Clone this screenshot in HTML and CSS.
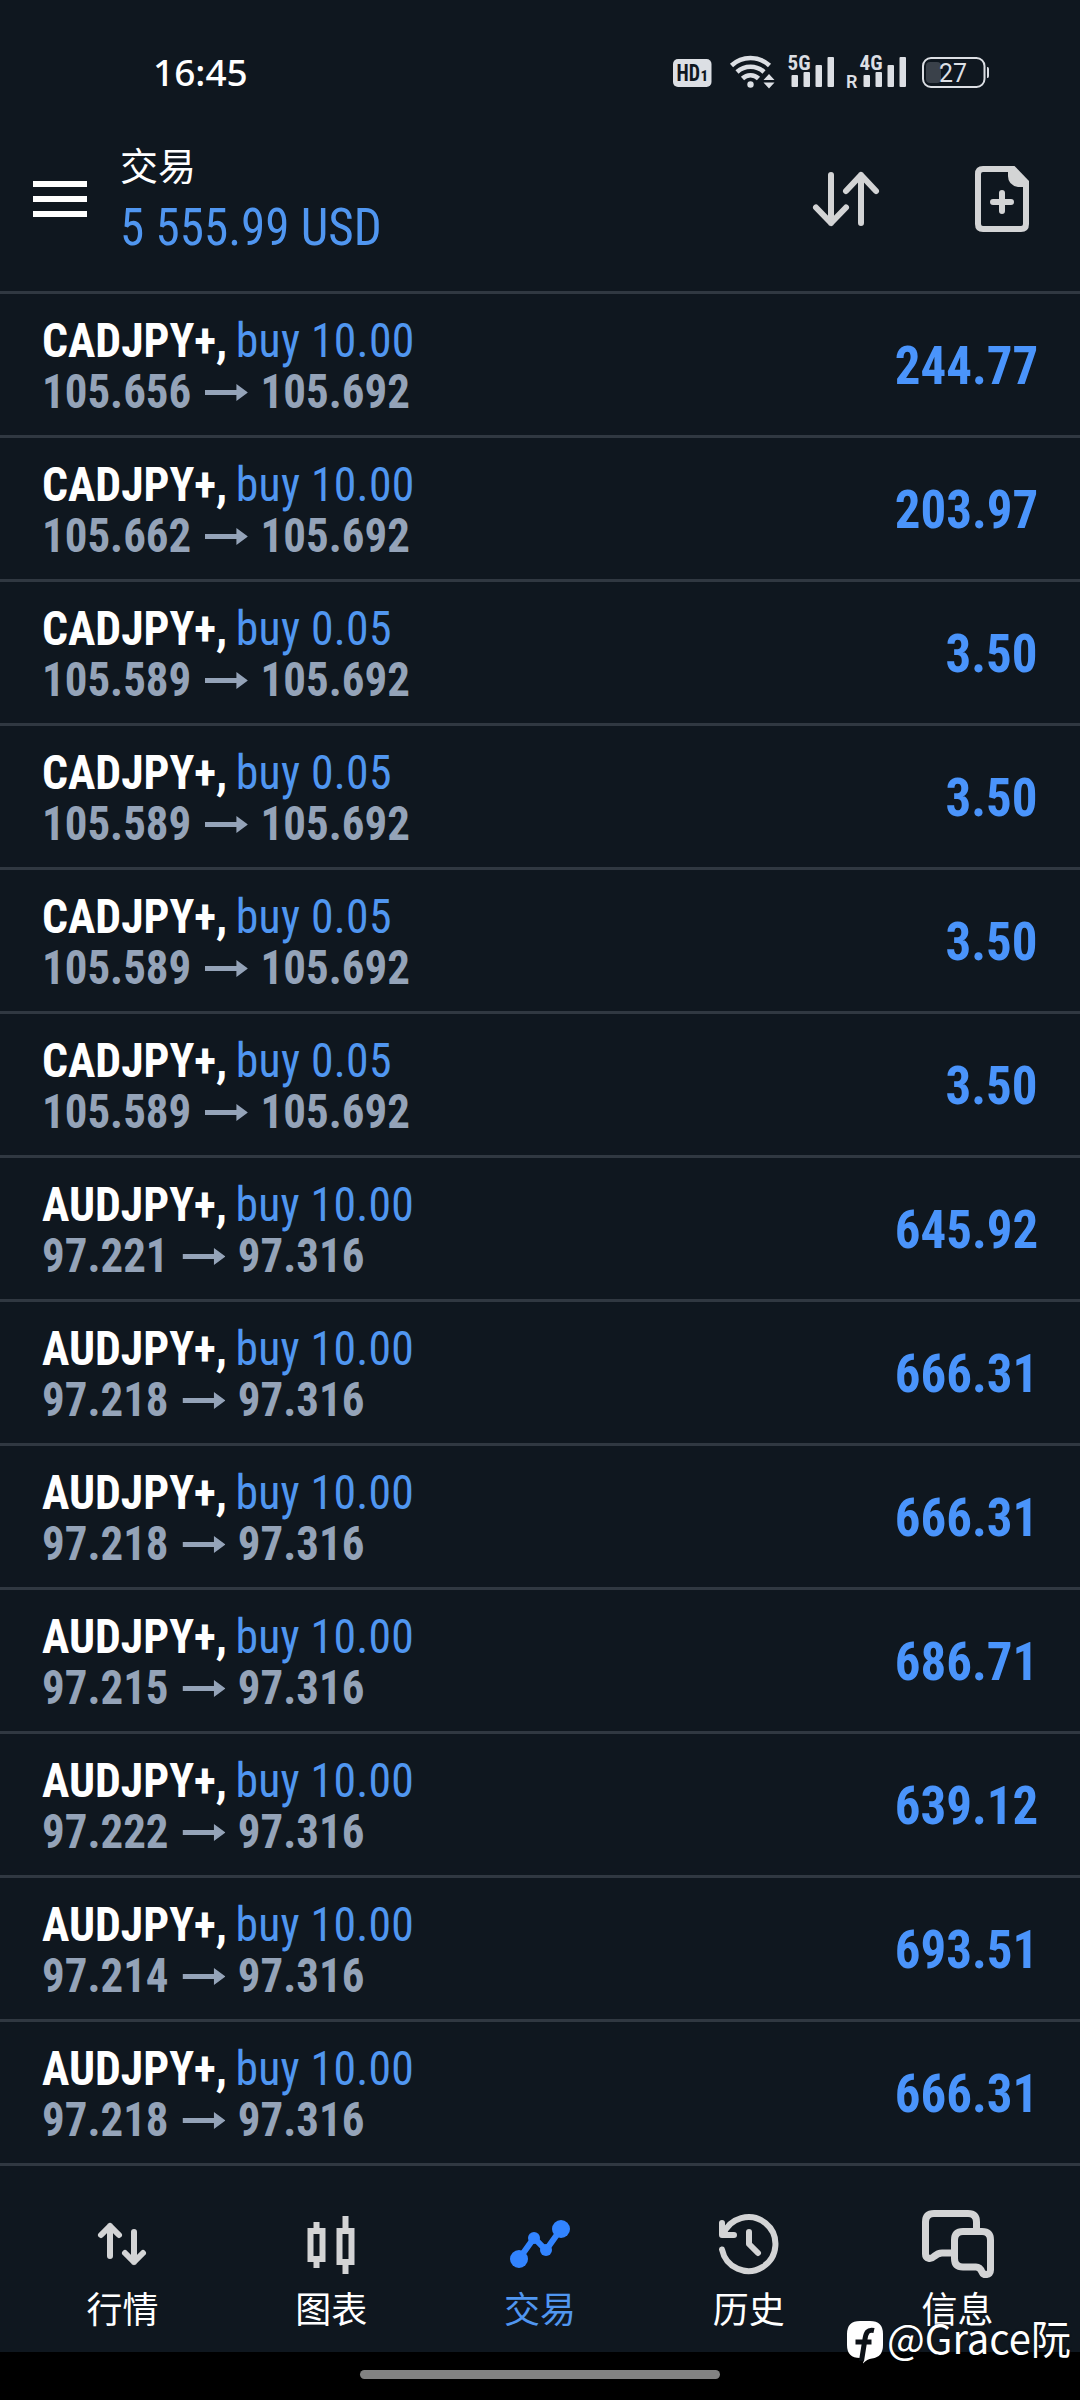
FILE: index.html
```html
<!DOCTYPE html>
<html lang="zh-CN">
<head>
<meta charset="utf-8">
<title>交易</title>
<link rel="stylesheet" href="styles.css">
</head>
<body>
<div class="screen">
  <div class="status-bar">
    <span class="clock">16:45</span>
    <svg class="status-icons" width="330" height="40" viewBox="668 52 330 40">
      <rect x="673" y="59" width="38.500" height="28" rx="5" fill="#dcdfe4"/>
      <text x="676.500" y="81" class="hd" textLength="23.500" lengthAdjust="spacingAndGlyphs">HD</text>
      <text x="700.500" y="81" class="hd-sim">1</text>
      <g fill="none" stroke="#dcdfe4" stroke-width="4.600">
        <path d="M731.500 65.500A28 28 0 0 1 769.500 65.500"/>
        <path d="M737 72A20 20 0 0 1 764 72"/>
        <path d="M742.500 78.500A11.500 11.500 0 0 1 758.500 78.500"/>
      </g>
      <g fill="#dcdfe4">
        <circle cx="750.500" cy="84.500" r="3.200"/>
        <path stroke="#0f171f" stroke-width="1.500" paint-order="stroke" d="M763.500 80 L769 74 L774.500 80 Z M763.500 82.500 L769 88.500 L774.500 82.500 Z"/>
        <rect x="791.500" y="75" width="6.500" height="12" rx="1"/>
        <rect x="803.500" y="72" width="6.500" height="15" rx="1"/>
        <rect x="815.500" y="65" width="6.500" height="22" rx="1"/>
        <rect x="827.500" y="57" width="6.500" height="30" rx="1"/>
        <rect x="863.500" y="75" width="6.500" height="12" rx="1"/>
        <rect x="875.500" y="72" width="6.500" height="15" rx="1"/>
        <rect x="887.500" y="65" width="6.500" height="22" rx="1"/>
        <rect x="899.500" y="57" width="6.500" height="30" rx="1"/>
        <path d="M987 67 H987.500 Q989 67 989 69 V76 Q989 78 987.500 78 H987 Z"/>
      </g>
      <text x="787.500" y="70" class="net" textLength="23" lengthAdjust="spacingAndGlyphs">5G</text>
      <text x="859.500" y="70" class="net" textLength="23" lengthAdjust="spacingAndGlyphs">4G</text>
      <text x="846" y="88" class="roam">R</text>
      <rect x="926" y="62" width="15" height="21" rx="4" fill="#3a414a"/>
      <rect x="923" y="58" width="61.500" height="29" rx="8" fill="none" stroke="#dcdfe4" stroke-width="2"/>
      <text x="939" y="81.500" class="battery" textLength="28" lengthAdjust="spacingAndGlyphs">27</text>
    </svg>
  </div>

  <header class="header">
    <svg class="menu" width="54" height="36" viewBox="0 0 54 36"><path d="M0 0H54V6H0ZM0 15H54V21H0ZM0 30H54V36H0Z" fill="#fff"/></svg>
    <div class="account">
      <h1 class="title">交易</h1>
      <div class="balance">5 555.99 USD</div>
    </div>
    <svg class="sort" width="70" height="60" viewBox="811 169 70 60" fill="none" stroke="#d3d4d5" stroke-width="6" stroke-linecap="round" stroke-linejoin="round">
      <path d="M831 175V223M816 207.500L831 223L846 207.500M861 223V175M846 191L861 175L876 191"/>
    </svg>
    <svg class="new-order" width="54" height="66" viewBox="975 166 54 66">
      <path d="M1014 169H983Q978 169 978 174V224Q978 229 983 229H1021Q1026 229 1026 224V183" fill="none" stroke="#d3d4d5" stroke-width="6"/>
      <path d="M1008 166H1014.500L1029 181V187H1018Q1008 185 1008 176Z" fill="#d3d4d5"/>
      <path d="M1002 193V211M993 202H1011" stroke="#d3d4d5" stroke-width="6" stroke-linecap="round"/>
    </svg>
  </header>

  <svg width="0" height="0" class="defs"><defs>
    <symbol id="to" viewBox="0 0 43 17" preserveAspectRatio="none"><path d="M0 6H31.500V0L43 8.500L31.500 17V11H0Z" fill="#94a3b8"/></symbol>
  </defs></svg>

  <main class="positions">
    <div class="row"><div class="deal"><div class="order"><b class="symbol">CADJPY+,</b><span class="side">buy 10.00</span></div><div class="prices"><span>105.656</span><svg class="to"><use href="#to"/></svg><span>105.692</span></div></div><div class="profit">244.77</div></div>
    <div class="row"><div class="deal"><div class="order"><b class="symbol">CADJPY+,</b><span class="side">buy 10.00</span></div><div class="prices"><span>105.662</span><svg class="to"><use href="#to"/></svg><span>105.692</span></div></div><div class="profit">203.97</div></div>
    <div class="row"><div class="deal"><div class="order"><b class="symbol">CADJPY+,</b><span class="side">buy 0.05</span></div><div class="prices"><span>105.589</span><svg class="to"><use href="#to"/></svg><span>105.692</span></div></div><div class="profit">3.50</div></div>
    <div class="row"><div class="deal"><div class="order"><b class="symbol">CADJPY+,</b><span class="side">buy 0.05</span></div><div class="prices"><span>105.589</span><svg class="to"><use href="#to"/></svg><span>105.692</span></div></div><div class="profit">3.50</div></div>
    <div class="row"><div class="deal"><div class="order"><b class="symbol">CADJPY+,</b><span class="side">buy 0.05</span></div><div class="prices"><span>105.589</span><svg class="to"><use href="#to"/></svg><span>105.692</span></div></div><div class="profit">3.50</div></div>
    <div class="row"><div class="deal"><div class="order"><b class="symbol">CADJPY+,</b><span class="side">buy 0.05</span></div><div class="prices"><span>105.589</span><svg class="to"><use href="#to"/></svg><span>105.692</span></div></div><div class="profit">3.50</div></div>
    <div class="row"><div class="deal"><div class="order"><b class="symbol">AUDJPY+,</b><span class="side">buy 10.00</span></div><div class="prices"><span>97.221</span><svg class="to"><use href="#to"/></svg><span>97.316</span></div></div><div class="profit">645.92</div></div>
    <div class="row"><div class="deal"><div class="order"><b class="symbol">AUDJPY+,</b><span class="side">buy 10.00</span></div><div class="prices"><span>97.218</span><svg class="to"><use href="#to"/></svg><span>97.316</span></div></div><div class="profit">666.31</div></div>
    <div class="row"><div class="deal"><div class="order"><b class="symbol">AUDJPY+,</b><span class="side">buy 10.00</span></div><div class="prices"><span>97.218</span><svg class="to"><use href="#to"/></svg><span>97.316</span></div></div><div class="profit">666.31</div></div>
    <div class="row"><div class="deal"><div class="order"><b class="symbol">AUDJPY+,</b><span class="side">buy 10.00</span></div><div class="prices"><span>97.215</span><svg class="to"><use href="#to"/></svg><span>97.316</span></div></div><div class="profit">686.71</div></div>
    <div class="row"><div class="deal"><div class="order"><b class="symbol">AUDJPY+,</b><span class="side">buy 10.00</span></div><div class="prices"><span>97.222</span><svg class="to"><use href="#to"/></svg><span>97.316</span></div></div><div class="profit">639.12</div></div>
    <div class="row"><div class="deal"><div class="order"><b class="symbol">AUDJPY+,</b><span class="side">buy 10.00</span></div><div class="prices"><span>97.214</span><svg class="to"><use href="#to"/></svg><span>97.316</span></div></div><div class="profit">693.51</div></div>
    <div class="row"><div class="deal"><div class="order"><b class="symbol">AUDJPY+,</b><span class="side">buy 10.00</span></div><div class="prices"><span>97.218</span><svg class="to"><use href="#to"/></svg><span>97.316</span></div></div><div class="profit">666.31</div></div>
  </main>

  <nav class="tabs">
    <a class="tab">
      <svg class="tab-icon" viewBox="82 2204 80 80" fill="none" stroke="#d3d4d5" stroke-width="6" stroke-linecap="round" stroke-linejoin="round"><path d="M110 2256V2226M101 2235L110 2226L119 2235M134 2232V2262M125 2253L134 2262L143 2253"/></svg>
      <span>行情</span>
    </a>
    <a class="tab">
      <svg class="tab-icon" viewBox="291 2204 80 80" fill="none" stroke="#d3d4d5" stroke-width="6"><path d="M310.500 2231H322.500V2259H310.500ZM316.500 2222V2228M316.500 2262V2268M339.500 2231H351.500V2262H339.500ZM345.500 2216V2228M345.500 2265V2274"/></svg>
      <span>图表</span>
    </a>
    <a class="tab active">
      <svg class="tab-icon" viewBox="500 2204 80 80" fill="#3284ff"><path d="M519 2259L534 2238L546 2250L561 2229" fill="none" stroke="#3284ff" stroke-width="6"/><circle cx="519" cy="2259" r="9"/><circle cx="534" cy="2238" r="6"/><circle cx="546" cy="2250" r="6"/><circle cx="561" cy="2229" r="9"/></svg>
      <span>交易</span>
    </a>
    <a class="tab">
      <svg class="tab-icon" viewBox="709 2204 80 80" fill="none" stroke="#d3d4d5" stroke-width="6" stroke-linecap="round" stroke-linejoin="round"><path d="M722 2223V2235H734M723 2235A27 27 0 1 1 722 2249.500M749 2232V2244L758 2253"/></svg>
      <span>历史</span>
    </a>
    <a class="tab">
      <svg class="tab-icon" viewBox="918 2204 80 80" fill="none" stroke="#d3d4d5" stroke-width="7"><path d="M976.500 2229V2222Q976.500 2213.500 968 2213.500H934Q925.500 2213.500 925.500 2222V2254C925.500 2259 931 2259.500 934 2256.500Q938 2253 942 2253H952"/><path d="M963 2231.500H982Q990.500 2231.500 990.500 2240V2270C990.500 2276 983.500 2275.500 982 2272Q980 2267 976 2267H963Q954.500 2267 954.500 2258.500V2240Q954.500 2231.500 963 2231.500Z"/></svg>
      <span>信息</span>
    </a>
  </nav>

  <footer class="gesture"><div class="pill"></div></footer>

  <div class="watermark">
    <svg width="38" height="44" viewBox="846 2320 38 44"><path d="M860 2321H870Q883 2321 883 2334V2345Q883 2357 872 2358.500Q867 2359 863 2363.500L864 2358H860Q847 2358 847 2345V2334Q847 2321 860 2321Z" fill="#fff"/><path d="M874 2330.500C867.500 2329 866 2333 865 2339L861.500 2361M855.500 2342H871.500" fill="none" stroke="#0c1117" stroke-width="5"/></svg>
    <span class="handle">@Grace阮</span>
  </div>
</div>
</body>
</html>
```
FILE: styles.css
```css
* { box-sizing: border-box; }
body { margin: 0; background: #0f171f; }

.screen {
  position: relative;
  display: flex;
  flex-direction: column;
  width: 1080px;
  height: 2400px;
  overflow: hidden;
  background: #0f171f;
  color: #fff;
  font-family: "Roboto Condensed", Roboto, "Noto Sans CJK SC", sans-serif;
}

.status-bar {
  display: flex;
  justify-content: space-between;
  height: 108px;
  padding: 52px 82px 0 153px;
}
.clock {
  font: 500 37px/40px "Noto Sans", sans-serif;
}
.status-icons text { fill: #dcdfe4; font-family: "Roboto Condensed", Roboto, sans-serif; }
.status-icons .hd { fill: #0f171f; font-size: 23px; font-weight: 700; }
.status-icons .hd-sim { fill: #0f171f; font-size: 15px; font-weight: 800; }
.status-icons .net { font-size: 20.500px; font-weight: 700; }
.status-icons .roam { font-size: 18px; font-weight: 600; font-family: Roboto, sans-serif; }
.status-icons .battery { font-size: 25px; font-weight: 400; font-family: Roboto, sans-serif; }

.header {
  display: flex;
  align-items: flex-start;
  height: 186px;
  padding: 0 51px 0 33px;
  border-bottom: 3px solid #303841;
}
.menu { margin-top: 73px; }
.account { flex: 1; margin: 28px 0 0 33px; }
.title {
  margin: 0;
  font: 400 38px/56px "Noto Sans CJK SC", sans-serif;
}
.balance {
  margin-top: 6px;
  font-size: 51px;
  line-height: 60px;
  color: #5096f0;
  transform: scaleX(0.962);
  transform-origin: left;
}
.sort { margin: 61px 94px 0 0; }
.new-order { margin-top: 58px; }

.defs { position: absolute; }

.row {
  display: flex;
  align-items: flex-start;
  justify-content: space-between;
  height: 144px;
  padding: 21px 42px 0 42px;
  border-bottom: 3px solid #303841;
}
/* The type is set slightly narrower than the condensed cut */
.order, .prices {
  height: 51px;
  font-size: 48px;
  line-height: 51px;
  white-space: nowrap;
  transform-origin: left;
}
.order { transform: scaleX(0.952); }
.symbol { margin-right: 9px; }
.side { letter-spacing: 0.270px; color: #5096f0; }
.prices {
  display: flex;
  align-items: center;
  font-weight: 700;
  color: #94a3b8;
  transform: scaleX(0.936);
}
.to { width: 46px; height: 17px; margin: 1px 13.500px 0 14.500px; }
.profit {
  margin-top: 21px;
  font-size: 54px;
  font-weight: 700;
  line-height: 60px;
  color: #4a94fb;
  transform: scaleX(0.943);
  transform-origin: right;
}

.tabs {
  display: flex;
  height: 186px;
  padding: 38px 18px 0;
}
.tab {
  display: flex;
  flex: 1;
  flex-direction: column;
  align-items: center;
  gap: 3px;
  font: 400 36px/40px "Noto Sans CJK SC", sans-serif;
}
.tab-icon { width: 80px; height: 80px; }
.tab.active { color: #5096f0; }

.gesture {
  display: flex;
  justify-content: center;
  height: 48px;
  padding-top: 18px;
  background: #000;
}
.pill { width: 360px; height: 9px; border-radius: 5px; background: #828282; }

/* Signature laid over the bottom right corner */
.watermark {
  position: absolute;
  left: 846px;
  top: 2320px;
  display: flex;
}
.handle {
  margin: -4px 0 0 3px;
  font: 400 40px/42px "Noto Sans CJK SC", sans-serif;
  white-space: nowrap;
  text-shadow: 0 0 2px #000;
}
```
